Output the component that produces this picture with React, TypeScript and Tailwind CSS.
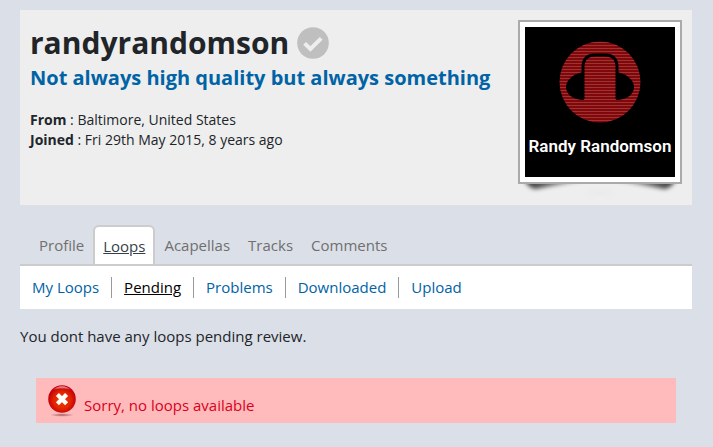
import { clsx } from "clsx";

const tabs = ["Profile", "Loops", "Acapellas", "Tracks", "Comments"];
const subTabs = ["My Loops", "Pending", "Problems", "Downloaded", "Upload"];

const VerifiedIcon = () => (
  <svg viewBox="0 0 32 32" className="size-8" aria-hidden="true">
    <circle cx="16" cy="16" r="15.8" fill="#bfbfbf" />
    <path d="M7.6 16.4 13.4 22 24.2 11.4" fill="none" stroke="#eee" strokeWidth="4" />
  </svg>
);

const ErrorIcon = () => (
  <svg viewBox="0 0 28 32" className="h-8 w-7" aria-hidden="true">
    <defs>
      <radialGradient id="ball" cx="50%" cy="55%" r="50%">
        <stop offset="0" stopColor="#f03c00" />
        <stop offset="0.6" stopColor="#e42600" />
        <stop offset="1" stopColor="#c4000c" />
      </radialGradient>
      <radialGradient id="ground">
        <stop offset="0" stopColor="#6b3030" stopOpacity="0.65" />
        <stop offset="1" stopColor="#6b3030" stopOpacity="0" />
      </radialGradient>
      <linearGradient id="shine" x1="0" y1="0" x2="0" y2="1">
        <stop offset="0" stopColor="#fff" stopOpacity="0.65" />
        <stop offset="1" stopColor="#fff" stopOpacity="0.05" />
      </linearGradient>
    </defs>
    <ellipse cx="14" cy="30" rx="12" ry="1.8" fill="url(#ground)" />
    <circle cx="14" cy="14" r="13.8" fill="url(#ball)" />
    <path d="M5 5.2C9.5-.2 18.5-.2 23 5.2 18 2.8 10 2.8 5 5.2Z" fill="url(#shine)" />
    <path d="m9.4 9.6 9.2 9.2m0-9.2-9.2 9.2" stroke="#fff" strokeWidth="4.2" />
  </svg>
);

const Avatar = () => (
  <svg
    viewBox="0 0 150 150"
    className="block size-[150px] bg-black"
    role="img"
    aria-label="Randy Randomson"
  >
    <defs>
      <pattern id="scan" width="4" height="3" patternUnits="userSpaceOnUse">
        <rect width="4" height="3" fill="#80080c" />
        <rect width="4" height="1" fill="#9c3431" />
      </pattern>
    </defs>
    <circle cx="75" cy="55" r="40.5" fill="url(#scan)" />
    {/* ear cups */}
    <path d="M58 45C48 47 41 53 41 60S48 73 59 73Z" />
    <path d="M92 45C102 47 109 53 109 60S102 73 91 73Z" />
    {/* head band */}
    <path
      d="M58 72V40Q58 28 70 28H80Q92 28 92 40V72"
      fill="none"
      stroke="#000"
      strokeWidth="3"
    />
    <text
      x="75"
      y="125"
      textAnchor="middle"
      fill="#fff"
      className="font-['Roboto'] text-[17px] font-semibold"
    >
      Randy Randomson
    </text>
  </svg>
);

const FrameShadow = () => (
  <svg
    viewBox="0 0 164 16"
    className="absolute top-full left-0 -mt-1 h-4 w-full overflow-visible blur-[2px]"
    aria-hidden="true"
  >
    <defs>
      <linearGradient id="curlLeft">
        <stop offset="0" stopColor="#222" stopOpacity="0.9" />
        <stop offset="1" stopColor="#222" stopOpacity="0.35" />
      </linearGradient>
      <linearGradient id="curlRight">
        <stop offset="0" stopColor="#222" stopOpacity="0.35" />
        <stop offset="1" stopColor="#222" stopOpacity="0.9" />
      </linearGradient>
    </defs>
    <path d="M6 0H66Q38 5 18 9Q12 9 6 0Z" fill="url(#curlLeft)" />
    <path d="M158 0H98Q126 5 146 9Q152 9 158 0Z" fill="url(#curlRight)" />
    <ellipse cx="82" cy="13" rx="12" ry="2" fill="#e9e9e9" />
  </svg>
);

const Header = () => (
  <header className="flex min-h-[195px] items-start justify-between bg-[#eee] p-2.5">
    <div className="pt-[3px]">
      <h1 className="flex items-center gap-2 text-[30px] leading-10 font-bold">
        <span>randyrandomson</span>
        <VerifiedIcon />
      </h1>
      <h2 className="text-[20px] leading-[30px] font-bold text-[#0063a6]">
        Not always high quality but always something
      </h2>
      <div className="mt-[17px] text-[14px] leading-5">
        <p>
          <strong>From</strong> : Baltimore, United States
        </p>
        <p>
          <strong>Joined</strong> : Fri 29th May 2015, 8 years ago
        </p>
      </div>
    </div>
    <div className="relative shrink-0">
      <FrameShadow />
      <div className="relative border-2 border-[#aaa] bg-white p-[5px]">
        <Avatar />
      </div>
    </div>
  </header>
);

const App = () => (
  <div className="min-h-screen bg-[#dbdfe8] py-2.5 pr-[21px] pl-5 font-['Open_Sans','Noto_Sans',sans-serif] text-[15px] leading-6 text-[#212529]">
    <Header />

    <nav className="mt-5 flex items-end border-b-2 border-[#ccc] pl-2.5" aria-label="Sections">
      {tabs.map((tab) => {
        const active = tab === "Loops";
        return (
          <a
            key={tab}
            href="#"
            className={clsx(
              active
                ? "rounded-t-md border-2 border-b-0 border-[#ccc] bg-white px-2 pt-[7px] pb-1.5 text-[#343f4b] underline"
                : "px-[9px] py-[7px] text-[#6f6f6f]"
            )}
          >
            {tab}
          </a>
        );
      })}
    </nav>

    <nav className="flex items-center bg-white py-[11px]" aria-label="Loops">
      {subTabs.map((tab, i) => (
        <a
          key={tab}
          href="#"
          className={clsx(
            "px-3 leading-[21px]",
            i > 0 && "border-l border-l-[#999]",
            tab === "Pending" ? "text-black underline" : "text-[#0063a6]"
          )}
        >
          {tab}
        </a>
      ))}
    </nav>

    <main>
      <p className="mt-[15px]">You dont have any loops pending review.</p>
      <div role="alert" className="mx-4 mt-[30px] flex h-[45px] items-center gap-2 bg-[#fbb] px-3 text-[#d9001b]">
        <ErrorIcon />
        <span className="pt-2">Sorry, no loops available</span>
      </div>
    </main>
  </div>
);

export default App;
